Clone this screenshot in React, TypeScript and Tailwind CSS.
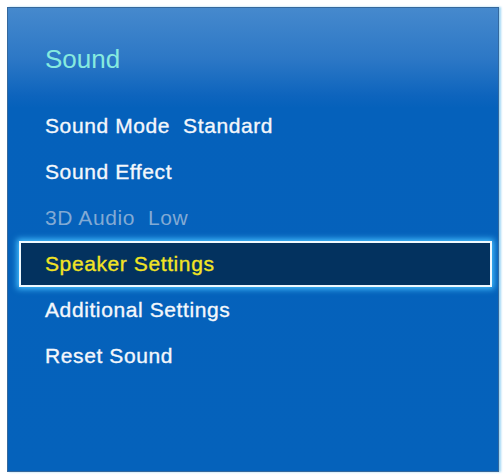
const items = [
    { label: 'Sound Mode', value: 'Standard' },
    { label: 'Sound Effect' },
    { label: '3D Audio', value: 'Low', disabled: true },
    { label: 'Speaker Settings', active: true },
    { label: 'Additional Settings' },
    { label: 'Reset Sound' },
];

export default function App() {
    return (
        <div className="h-[474px] w-[504px] overflow-hidden bg-white pl-[7px] pt-[7px] font-['Liberation_Sans',Arial,sans-serif]">
            <div className="h-[465px] w-[492px] border border-[#35689c] bg-[linear-gradient(180deg,#4689cd_0px,#2d78c6_50px,#0d64bd_88px,#0561bb_100px,#0562bb_100%)] pt-[36px] shadow-[2px_0_2px_#9fd6f5]">
                <h1 className="pl-[37px] text-[26px] leading-[30px] text-[#86eadf]">Sound</h1>
                <ul className="mt-[29px] flex flex-col">
                    {items.map((item) => (
                        <li
                            key={item.label}
                            className={
                                item.active
                                    ? 'ml-[11px] mr-[6px] h-[46px] border-2 border-[#eef9ff] bg-[#03325f] pl-[24px] text-[21px] leading-[42px] tracking-[0.6px] text-[#f2e424] [-webkit-text-stroke:0.35px_#f2e424] shadow-[0_0_6px_2px_#45c0ff]'
                                    : item.disabled
                                      ? 'ml-[11px] mr-[6px] h-[46px] border-2 border-transparent pl-[24px] text-[21px] leading-[42px] tracking-[0.6px] text-[#82aad4]'
                                      : 'ml-[11px] mr-[6px] h-[46px] border-2 border-transparent pl-[24px] text-[21px] leading-[42px] tracking-[0.6px] text-[#f4f7fb] [-webkit-text-stroke:0.35px_#f4f7fb]'
                            }
                        >
                            {item.label}
                            {item.value && <span className="ml-[13px]">{item.value}</span>}
                        </li>
                    ))}
                </ul>
            </div>
        </div>
    );
}
